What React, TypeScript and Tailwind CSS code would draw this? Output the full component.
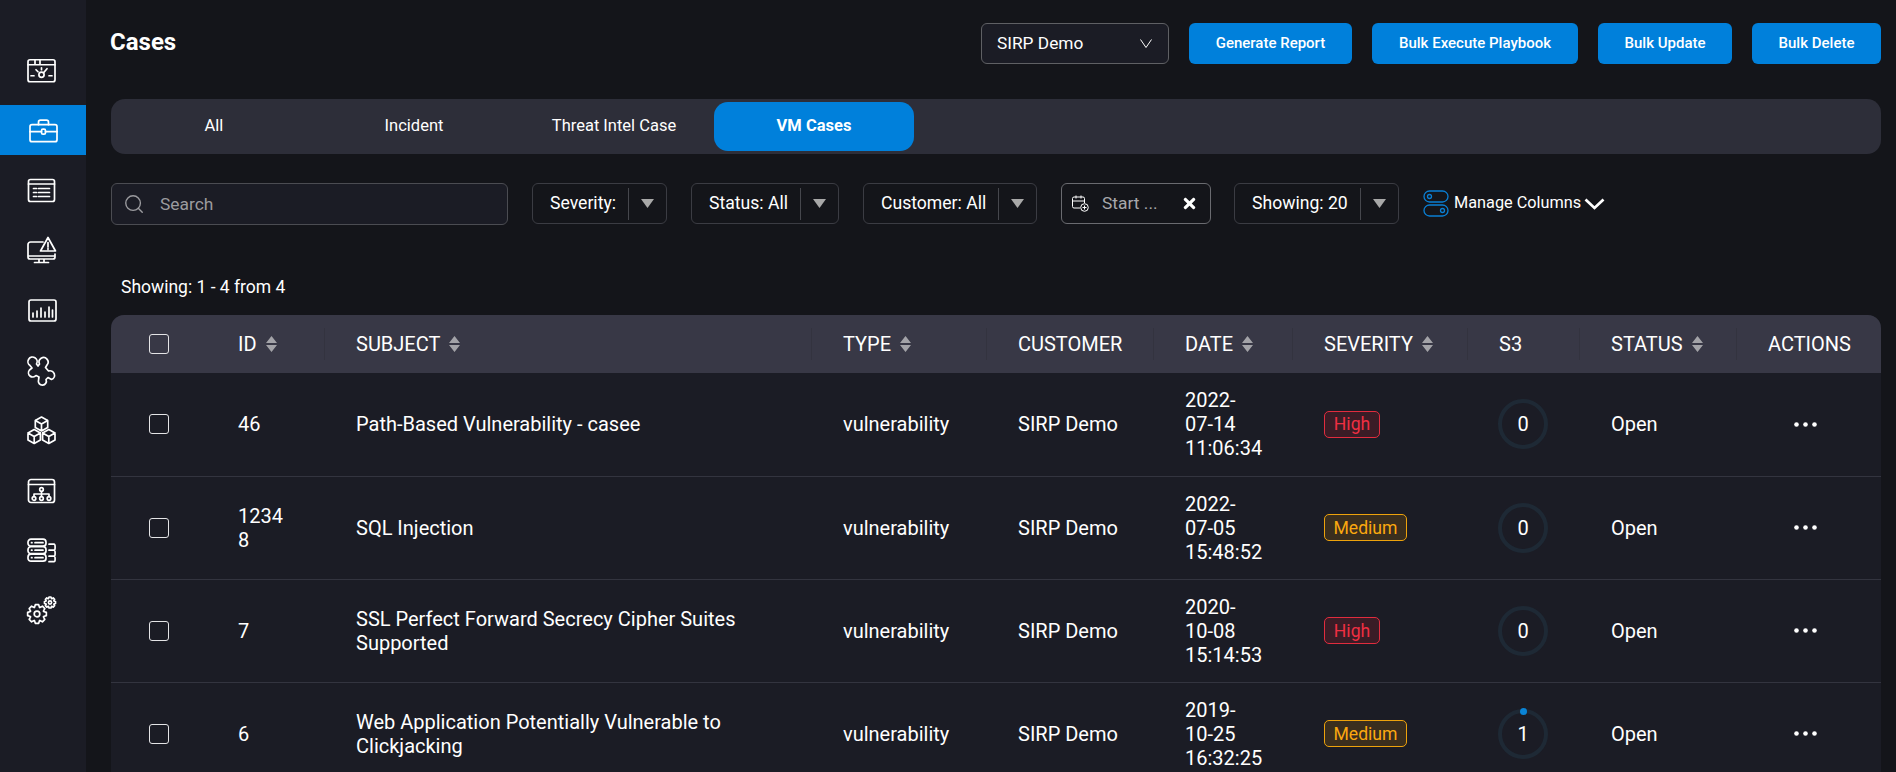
import { Search } from "lucide-react";
import { FaTimes } from "react-icons/fa";

const gear = (cx: number, cy: number, r: number, teeth: number) => {
  // outline of a cog, alternating outer and inner radius
  const pts: string[] = [];
  const inner = r * 0.74;
  for (let i = 0; i < teeth; i++) {
    const a = (i / teeth) * Math.PI * 2;
    const w = Math.PI / teeth;
    [
      [inner, a - w * 0.95],
      [r, a - w * 0.45],
      [r, a + w * 0.45],
      [inner, a + w * 0.95],
    ].forEach(([rad, ang]) => {
      pts.push(`${(cx + rad * Math.cos(ang)).toFixed(2)} ${(cy + rad * Math.sin(ang)).toFixed(2)}`);
    });
  }
  return `M${pts.join("L")}Z`;
};

const cube = (x: number, y: number) =>
  `M${x} ${y - 7}l6.2 3.4v7.1L${x} ${y + 7}l-6.2-3.5v-7.1ZM${x - 6.2} ${y - 3.6}L${x} ${y}l6.2-3.6M${x} ${y}v7`;

const icons = [
  {
    dx: -1,
    dy: 2.75,
    node: (
      <>
        <rect x="1" y="1" width="27" height="22" rx="2" />
        <path d="M1 6h27M8 1v5M13 1v5M4 17h3M22 17h3M9 11l2 2M14.500 9v2M20 10l-3 3.500" />
        <circle cx="14.500" cy="16" r="2.600" />
      </>
    ),
  },
  {
    dx: 1,
    dy: 2.700,
    node: (
      <>
        <rect x="1" y="6" width="27" height="17" rx="2" />
        <path d="M9.500 6V3.500a2 2 0 0 1 2-2h6a2 2 0 0 1 2 2V6M1 13h11.500M16.500 13H28" />
        <rect x="12.500" y="10.500" width="4" height="5" rx="1.500" />
      </>
    ),
  },
  {
    dx: -0.500,
    dy: 2.500,
    node: (
      <>
        <rect x="1" y="1" width="26" height="22" rx="2" />
        <path d="M1 5.500h26M6 10h3M11 10h11M6 14h3M11 14h11M6 18h3M11 18h11" />
      </>
    ),
  },
  {
    dx: -1,
    dy: 0,
    node: (
      <>
        <path d="M16 6H3.500A2.500 2.500 0 0 0 1 8.500V21a2 2 0 0 0 2 2h23a2 2 0 0 0 2-2v-3M1 20h27M12 23v3.500M17 23v3.500M7.500 26.500h14" />
        <path d="M21 1.500l7.500 13.500h-15ZM21 6.500v4.500M21 12.500v.8" />
      </>
    ),
  },
  {
    dx: 0,
    dy: 3,
    node: (
      <>
        <rect x="1" y="1" width="27" height="21" rx="2" />
        <path d="M5 18v-4M9 18v-6M13 18V9M17 18v-5M21 18V8M24.500 18V11" />
      </>
    ),
  },
  {
    dx: -1,
    dy: 0,
    node: (
      <path d="M3 9.500A4.600 4.600 0 1 1 9.500 8L11 10l1.500-2A4.500 4.500 0 1 1 20 9l-1.500 2.500 3 3.500a4.300 4.300 0 1 1 3 8.500L21 21.500l-2 2a4 4 0 1 1-7.500.5l.5-3-3-1.500A4.200 4.200 0 1 1 2.500 14L5 12Z" />
    ),
  },
  { dx: -1, dy: 0, node: <path d={cube(14.500, 8) + cube(7.200, 20.500) + cube(21.800, 20.500)} /> },
  {
    dx: -0.500,
    dy: 2.500,
    node: (
      <>
        <rect x="1" y="1" width="26" height="23" rx="2.500" />
        <path d="M1 6h26M14 13v2.500M6.500 18v-2.500h15V18M14 15.500V18" />
        <circle cx="14" cy="11" r="1.800" />
        <circle cx="6.500" cy="20" r="1.800" />
        <circle cx="14" cy="20" r="1.800" />
        <circle cx="21.500" cy="20" r="1.800" />
      </>
    ),
  },
  {
    dx: -1,
    dy: 2.200,
    node: (
      <>
        <rect x="1" y="1" width="18" height="7" rx="3" />
        <rect x="1" y="8.500" width="18" height="7" rx="3" />
        <rect x="1" y="16" width="18" height="7" rx="3" />
        <path d="M8 4.500h8M8 12h8M8 19.500h8M4.500 4.500h.5M4.500 12h.5M4.500 19.500h.5M22 6h5c1.500 0 1.500 6 0 6h-5M27 12c1.500 0 1.500 6 0 6h-5M27 18c1.500 0 1.500 5.500 0 5.500h-5" />
      </>
    ),
  },
  {
    dx: -1,
    dy: 0,
    node: (
      <>
        <path d={gear(10, 18, 9.500, 8)} />
        <circle cx="10" cy="18" r="2.800" />
        <path d={gear(23, 6.500, 5.600, 8)} />
        <circle cx="23" cy="6.500" r="1.600" />
      </>
    ),
  },
];

const SortArrows = () => (
  <svg width="11" height="16" viewBox="0 0 11 16" fill="#a3a3a8" className="ml-[9px] shrink-0">
    <path d="M5.500 0L11 7H0ZM0 9h11l-5.500 7Z" />
  </svg>
);

const Caret = () => (
  <svg width="13" height="9" viewBox="0 0 13 9" fill="#a8a8a8">
    <path d="M0 0h13L6.500 9Z" />
  </svg>
);

const Checkbox = () => <div className="h-5 w-5 rounded-[3px] border border-[#e4e4e6]" />;

const FilterSelect = ({ label, width, textW }: { label: string; width: string; textW: string }) => (
  <div className={`flex h-[41px] items-center rounded-[6px] border border-[#3b3c43] ${width}`}>
    <div className={`pl-[17px] text-[17.600px] ${textW}`}>{label}</div>
    <div className="h-8 w-px bg-[#46474d]" />
    <div className="flex flex-1 justify-center">
      <Caret />
    </div>
  </div>
);

const Ring = ({ value }: { value: number }) => (
  <div className="relative ml-[-1px] flex h-[50px] w-[50px] items-center justify-center rounded-full border-[4px] border-[#1e2935]">
    {value}
    {value > 0 && <span className="absolute -top-[5px] left-[18px] h-[7px] w-[7px] rounded-full bg-[#0a84d6]" />}
  </div>
);

const Badge = ({ level }: { level: string }) =>
  level === "High" ? (
    <span className="inline-flex h-[27px] w-[56px] items-center justify-center rounded-[5px] border border-[#e12c3e] bg-[#3a1c26] text-[17.600px] text-[#ef2f42]">
      High
    </span>
  ) : (
    <span className="inline-flex h-[27px] w-[83px] items-center justify-center rounded-[5px] border border-[#eda20c] bg-[#3a2e1e] text-[17.600px] text-[#fba80f]">
      Medium
    </span>
  );

const columns = [
  { label: "ID", w: "w-[118px]", sort: true },
  { label: "SUBJECT", w: "w-[487px]", sort: true },
  { label: "TYPE", w: "w-[175px]", sort: true },
  { label: "CUSTOMER", w: "w-[167px]", sort: false },
  { label: "DATE", w: "w-[139px]", sort: true },
  { label: "SEVERITY", w: "w-[175px]", sort: true },
  { label: "S3", w: "w-[112px]", sort: false },
  { label: "STATUS", w: "w-[157px]", sort: true },
  { label: "ACTIONS", w: "w-[145px]", sort: false },
];

const rows = [
  { id: "46", subject: "Path-Based Vulnerability - casee", date: "2022-07-14 11:06:34", severity: "High", s3: 0 },
  { id: "12348", subject: "SQL Injection", date: "2022-07-05 15:48:52", severity: "Medium", s3: 0 },
  { id: "7", subject: "SSL Perfect Forward Secrecy Cipher Suites Supported", date: "2020-10-08 15:14:53", severity: "High", s3: 0 },
  { id: "6", subject: "Web Application Potentially Vulnerable to Clickjacking", date: "2019-10-25 16:32:25", severity: "Medium", s3: 1 },
];

const buttons = [
  { label: "Generate Report", w: "w-[163px]" },
  { label: "Bulk Execute Playbook", w: "w-[206px]" },
  { label: "Bulk Update", w: "w-[134px]" },
  { label: "Bulk Delete", w: "w-[129px]" },
];

const App = () => {
  return (
    <div className="flex h-screen overflow-hidden bg-[#14151a] font-['Roboto',sans-serif] text-white">
      {/* Sidebar */}
      <aside className="flex w-[86px] shrink-0 flex-col gap-[10px] bg-[#1b1c25] pt-[45px]">
        {icons.map((icon, i) => (
          <div key={i} className={`flex h-[50px] items-center justify-center ${i === 1 ? "bg-[#0080db]" : ""}`}>
            <svg
              width="30"
              height="28"
              viewBox="0 0 30 28"
              fill="none"
              stroke="white"
              strokeWidth="1.700"
              strokeLinecap="round"
              strokeLinejoin="round"
              className="overflow-visible"
            >
              <g transform={`translate(${icon.dx} ${icon.dy})`}>{icon.node}</g>
            </svg>
          </div>
        ))}
      </aside>

      {/* Main */}
      <main className="flex min-w-0 flex-1 flex-col pl-[25px] pr-[15px] pt-[23px]">
        <div className="flex h-[41px] shrink-0 items-center">
          <h1 className="-ml-px pb-1 text-[24px] font-bold leading-none">Cases</h1>
          <div className="ml-auto flex h-[41px] gap-5">
            <div className="flex w-[188px] items-center justify-between rounded-[6px] border border-[#5f6064] bg-[#1b1c25] pl-[15px] pr-4 text-[17.300px]">
              SIRP Demo
              <svg width="12" height="9" viewBox="0 0 12 9" fill="none" stroke="white" strokeWidth="1">
                <path d="M.5.5L6 8.500 11.500.5" />
              </svg>
            </div>
            {buttons.map((b) => (
              <button key={b.label} className={`rounded-[6px] bg-[#0080db] text-[15px] font-medium ${b.w}`}>
                {b.label}
              </button>
            ))}
          </div>
        </div>

        {/* Tabs */}
        <div className="mt-[35px] flex h-[55px] shrink-0 items-center rounded-[14px] bg-[#2d2e39] px-[3px] text-[16.500px]">
          <div className="flex h-[49px] w-[200px] items-center justify-center">All</div>
          <div className="flex h-[49px] w-[200px] items-center justify-center">Incident</div>
          <div className="flex h-[49px] w-[200px] items-center justify-center">Threat Intel Case</div>
          <div className="flex h-[49px] w-[200px] items-center justify-center rounded-[14px] bg-[#0080db] font-bold">
            VM Cases
          </div>
        </div>

        {/* Filters */}
        <div className="mt-[29px] flex shrink-0 items-start gap-6">
          <div className="flex h-[42px] w-[397px] items-center rounded-[6px] border border-[#4b4c52] bg-[#1b1c25] pl-[11px] text-[17.400px] text-[#9b9b9f]">
            <Search size={22} strokeWidth={1.500} />
            <span className="ml-[15px]">Search</span>
          </div>
          <FilterSelect label="Severity:" width="w-[135px]" textW="w-[95px]" />
          <FilterSelect label="Status: All" width="w-[148px]" textW="w-[108px]" />
          <FilterSelect label="Customer: All" width="w-[174px]" textW="w-[134px]" />
          <div className="flex h-[41px] w-[150px] items-center rounded-[6px] border border-[#6a6b70] pl-[10px] text-[17.400px] text-[#a8a8ac]">
            <svg width="17" height="17" viewBox="0 0 17 17" fill="none" stroke="white" strokeWidth="1">
              <path d="M8 13H2a1.500 1.500 0 0 1-1.500-1.500V3.500A1.500 1.500 0 0 1 2 2h9a1.500 1.500 0 0 1 1.500 1.500V8M.5 6h12M4 .5v3M9 .5v3" />
              <circle cx="12.500" cy="12.500" r="3.800" />
              <path d="M12.500 10.500v4M10.500 12.500h4" />
            </svg>
            <span className="ml-[13px]">Start ...</span>
            <FaTimes size={17} className="ml-auto mr-3 text-white" />
          </div>
          <div className="-ml-px">
            <FilterSelect label="Showing: 20" width="w-[165px]" textW="w-[125px]" />
          </div>
          <div className="flex h-[41px] items-center">
            <svg width="26" height="27" viewBox="0 0 26 27" fill="none" stroke="#0a7fd4" strokeWidth="1.300">
              <rect x="1" y="1" width="24" height="11" rx="5.500" />
              <circle cx="6.500" cy="6.500" r="2" />
              <rect x="1" y="15" width="24" height="11" rx="5.500" />
              <circle cx="19.500" cy="20.500" r="2" />
            </svg>
            <span className="ml-[5px] text-[16.300px]">Manage Columns</span>
            <svg width="21" height="12" viewBox="0 0 21 12" fill="none" stroke="white" strokeWidth="2.700" className="ml-[3px]">
              <path d="M1.500 1.500l9 8.500 9-8.500" />
            </svg>
          </div>
        </div>

        <div className="ml-[10px] mt-[50px] shrink-0 text-[17.500px] leading-6">Showing: 1 - 4 from 4</div>

        {/* Table */}
        <div className="mt-4 shrink-0 overflow-hidden rounded-t-[13px] bg-[#1b1c25]">
          <table className="w-full table-fixed border-collapse text-left text-[20px] leading-6">
            <thead>
              <tr className="h-[58px] bg-[#383846]">
                <th className="w-[95px] pl-[38px]">
                  <Checkbox />
                </th>
                {columns.map((c, i) => (
                  <th key={c.label} className={`p-0 font-normal ${c.w}`}>
                    <div className={`flex h-8 items-center ${i > 0 ? "border-l border-[#33333f] pl-[31px]" : "pl-8"}`}>
                      {c.label}
                      {c.sort && <SortArrows />}
                    </div>
                  </th>
                ))}
              </tr>
            </thead>
            <tbody>
              {rows.map((r) => (
                <tr key={r.id} className="h-[103px] border-b border-[#33343f]">
                  <td className="pl-[38px]">
                    <Checkbox />
                  </td>
                  <td className="break-all px-8">{r.id}</td>
                  <td className="px-8">{r.subject}</td>
                  <td className="px-8">vulnerability</td>
                  <td className="px-8">SIRP Demo</td>
                  <td className="px-8">{r.date}</td>
                  <td className="px-8">
                    <Badge level={r.severity} />
                  </td>
                  <td className="pl-8">
                    <Ring value={r.s3} />
                  </td>
                  <td className="px-8">Open</td>
                  <td className="pl-[58px]">
                    <svg width="23" height="5" viewBox="0 0 23 5" fill="white">
                      <circle cx="2.500" cy="2.500" r="2.300" />
                      <circle cx="11.500" cy="2.500" r="2.300" />
                      <circle cx="20.500" cy="2.500" r="2.300" />
                    </svg>
                  </td>
                </tr>
              ))}
            </tbody>
          </table>
        </div>
      </main>
    </div>
  );
};

export default App;
